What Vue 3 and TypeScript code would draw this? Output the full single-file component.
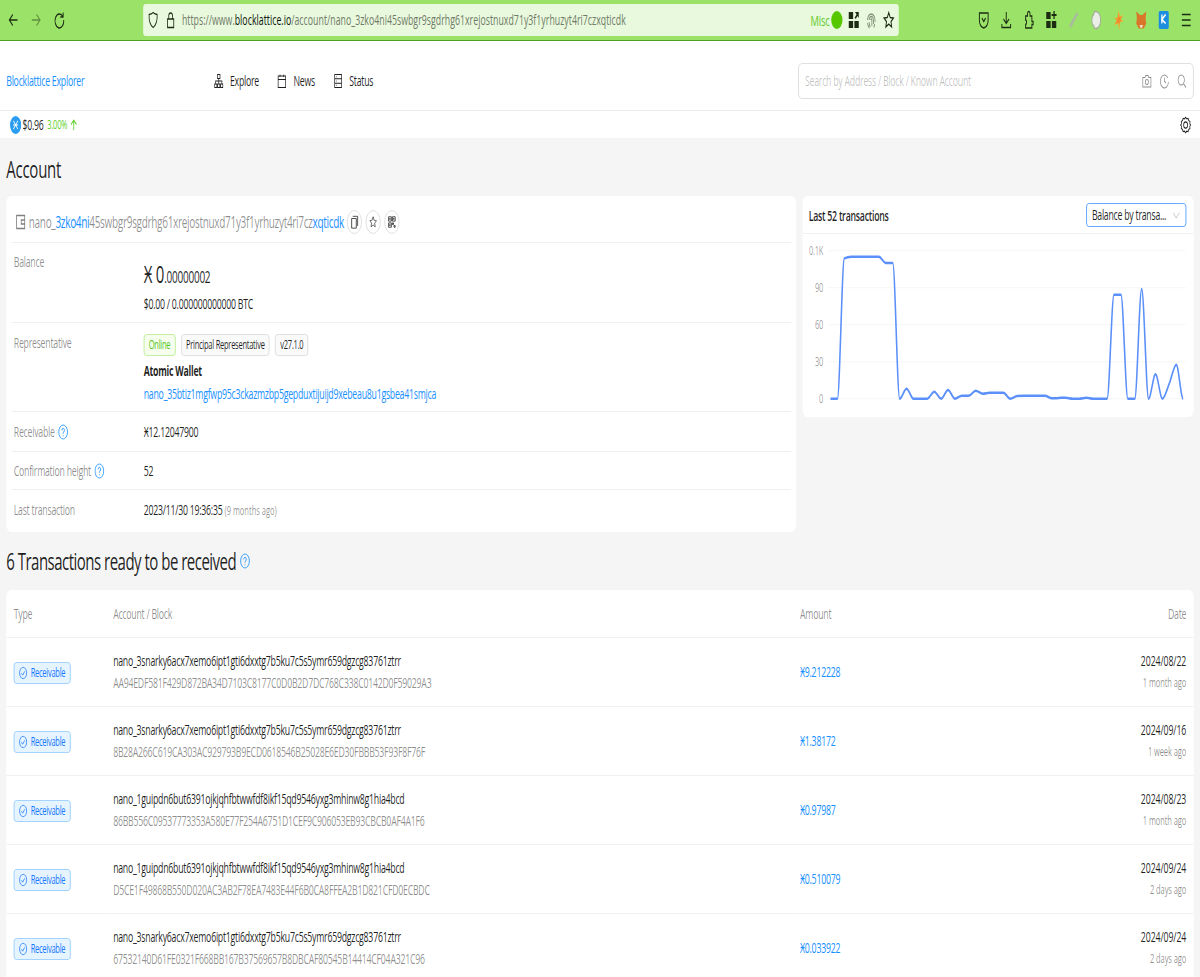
<script setup lang="ts">
import { computed } from 'vue'

// zoomed-in readings of the chart line, y only, one per transaction
const chartY = [
  611, 611, 190, 185, 185, 185, 185, 185, 204, 204, 611, 581, 611, 611, 611, 590, 611, 585, 611, 602,
  602, 587, 596, 593, 593, 593, 611, 603, 602, 602, 602, 602, 610, 609, 608, 611, 611, 608, 611, 611,
  611, 299, 299, 611, 611, 282, 611, 538, 611, 565, 509, 611,
]

function px(zx: number) {
  return ((zx - 6) / 3) * 1.6
}
function py(zy: number) {
  return (zy - 117) / 3
}

const linePath = computed(() => {
  const x0 = px(90)
  const step = (px(1148) - x0) / (chartY.length - 1)
  const ys = chartY.map(py)
  const slopes = ys.slice(1).map((y, i) => (y - ys[i]) / step)
  const tangents = ys.map((_, i) => {
    const a = slopes[i - 1] ?? 0
    const b = slopes[i] ?? 0
    return a * b <= 0 ? 0 : (2 * a * b) / (a + b)
  })
  let d = `M${x0} ${ys[0]}`
  for (let i = 1; i < ys.length; i++) {
    const xa = x0 + step * (i - 1)
    const xb = x0 + step * i
    const c = step / 3
    d += `C${xa + c} ${ys[i - 1] + tangents[i - 1] * c} ${xb - c} ${ys[i] - tangents[i] * c} ${xb} ${ys[i]}`
  }
  return d
})

const ticks = [
  { label: '0.1K', y: 167 },
  { label: '90', y: 278 },
  { label: '60', y: 389 },
  { label: '30', y: 500 },
  { label: '0', y: 611 },
]

const nano1 = 'nano_3snarky6acx7xemo6ipt1gti6dxxtg7b5ku7c5s5ymr659dgzcg83761ztrr'
const nano2 = 'nano_1guipdn6but6391ojkjqhfbtwwfdf8ikf15qd9546yxg3mhinw8g1hia4bcd'

const rows = [
  { account: nano1, hash: 'AA94EDF581F429D872BA34D7103C8177C0D0B2D7DC768C338C0142D0F59029A3', amount: 'Ӿ9.212228', date: '2024/08/22', ago: '1 month ago' },
  { account: nano1, hash: '8B28A266C619CA303AC929793B9ECD0618546B25028E6ED30FBBB53F93F8F76F', amount: 'Ӿ1.38172', date: '2024/09/16', ago: '1 week ago' },
  { account: nano2, hash: '86BB556C09537773353A580E77F254A6751D1CEF9C906053EB93CBCB0AF4A1F6', amount: 'Ӿ0.97987', date: '2024/08/23', ago: '1 month ago' },
  { account: nano2, hash: 'D5CE1F49868B550D020AC3AB2F78EA7483E44F6B0CA8FFEA2B1D821CFD0ECBDC', amount: 'Ӿ0.510079', date: '2024/09/24', ago: '2 days ago' },
  { account: nano1, hash: '67532140D61FE0321F668BB167B37569657B8DBCAF80545B14414CF04A321C96', amount: 'Ӿ0.033922', date: '2024/09/24', ago: '2 days ago' },
]
</script>

<template>
  <div class="screen">
    <div class="toolbar">
      <div class="tb-group">
        <svg class="tb-icon" viewBox="0 0 20 20"><path d="M17 10H4M9.500 4.500 4 10l5.500 5.500" /></svg>
        <svg class="tb-icon faded" viewBox="0 0 20 20"><path d="M3 10h13M10.500 4.500 16 10l-5.500 5.500" /></svg>
        <svg class="tb-icon" viewBox="0 0 20 20"><path d="M15.500 6.500A7 7 0 1 0 17 10M16 2.500v4.500h-4.500" /></svg>
      </div>
      <div class="urlbar">
        <svg class="tb-icon thin" viewBox="0 0 20 20"><path d="M10 2.500c2 1.300 4 1.800 6.500 2 .3 6-1.500 10.500-6.500 13-5-2.500-6.800-7-6.500-13 2.500-.2 4.500-.7 6.500-2Z" /></svg>
        <svg class="tb-icon thin" viewBox="0 0 20 20"><path d="M5 9h10v8.500H5zM7 9V6a3 3 0 0 1 6 0v3" /></svg>
        <div class="url"><span>https://www.</span><b>blocklattice.io</b><span>/account/nano_3zko4ni45swbgr9sgdrhg61xrejostnuxd71y3f1yrhuzyt4ri7czxqticdk</span></div>
        <span class="misc">Misc</span>
        <span class="misc-dot"></span>
        <svg class="tb-icon solid" viewBox="0 0 20 20"><path d="M2 2h7v7H2zM11 11h7v7h-7zM2 11h7v7H2zM12 2h6v6l-2-2-3 3-1.500-1.500 3-3z" /></svg>
        <svg class="tb-icon print" viewBox="0 0 20 20"><path d="M4 10a6 6 0 0 1 12 0v2M6.500 10a3.500 3.500 0 0 1 7 0v4M9 10a1 1 0 0 1 2 0v6M4 13c.3 2 1.300 3.500 3 5M6.500 12c0 2 .7 3.500 2 5M15.500 14c-.3 1.300-.8 2.500-1.500 3.500" /></svg>
        <svg class="tb-icon" viewBox="0 0 20 20"><path d="m10 2.500 2.300 5 5.200.6-3.900 3.500 1.100 5.400-4.700-2.800L5.300 17l1.100-5.400L2.500 8.100l5.200-.6Z" /></svg>
      </div>
      <div class="tb-group ext">
        <svg class="tb-icon" viewBox="0 0 20 20"><path d="M3 3h14v7c0 4-3 7-7 8-4-1-7-4-7-8ZM7 8l3 3.500L13 8" /></svg>
        <svg class="tb-icon" viewBox="0 0 20 20"><path d="M10 2v11M5.500 9l4.500 4.500L14.500 9M3 14v3.500h14V14" /></svg>
        <svg class="tb-icon" viewBox="0 0 20 20"><path d="M5 6h3V3.500a2 2 0 0 1 4 0V6h3v5.500h2v3h-2v3.500H5v-3.500c2 .5 2-5 0-4.500Z" /></svg>
        <svg class="tb-icon solid" viewBox="0 0 20 20"><path d="M2 2h7v7H2zM2 11h7v7H2zM11 11h7v7h-7zM13.500 1h2v3h3v2h-3v3h-2V6h-3V4h3z" /></svg>
        <svg class="tb-icon" viewBox="0 0 20 20"><path class="slash" d="m4 17 6-7 6-7" /></svg>
        <svg class="tb-icon" viewBox="0 0 20 20"><path class="ghost" d="M9 1.500c5 0 8 4 8 8.500s-3 8.500-8 8.500c-2 0-3-1.500-3-3-2 0-3-2-3-5.500s2-5 3-5.500c0-1.500 1-3 3-3Z" /></svg>
        <svg class="tb-icon" viewBox="0 0 20 20"><path class="spark" d="m10 1 1.500 6L17 5l-4 4.500 4 1.500-5 1-1.500 7L9 13l-6 2 4-5-4-2 5 0Z" /></svg>
        <svg class="tb-icon" viewBox="0 0 20 20">
          <path class="fox" d="M2 1.500 8 5h4l6-3.500-1 7 1 5-4 5h-8l-4-5 1-5Z" />
          <path class="fox-light" d="M7 15h6l-2 3H9Z" />
        </svg>
        <svg class="tb-icon" viewBox="0 0 20 20">
          <rect class="k-bg" x="2" y="1" width="16" height="18" rx="2" />
          <path class="k-mark" d="M7 4.500v9M13 4.500l-6 5 6 4" />
        </svg>
        <svg class="tb-icon" viewBox="0 0 20 20"><path d="M3 4.500h14M3 10h14M3 15.500h14" /></svg>
      </div>
    </div>

    <header class="site-header">
      <a class="brand">Blocklattice Explorer</a>
      <nav class="nav">
        <span class="nav-item">
          <svg class="icon" viewBox="0 0 16 16"><path d="M6 1.500h4v4H6zM8 5.500V8M3 11V8h10v3M1.500 11h3.500v3.500H1.500zM6.250 11h3.500v3.500h-3.500zM11 11h3.500v3.500H11zM8 8v3" /></svg>
          Explore
        </span>
        <span class="nav-item">
          <svg class="icon" viewBox="0 0 16 16"><path d="M2 3h12v11.500H2zM2 6.500h12M5 1.500V4M11 1.500V4" /></svg>
          News
        </span>
        <span class="nav-item">
          <svg class="icon" viewBox="0 0 16 16"><path d="M2.500 1.500h11v13h-11zM2.500 5.800h11M2.500 10.200h11M4.500 3.700h1M4.500 8h1M4.500 12.300h1" /></svg>
          Status
        </span>
      </nav>
      <div class="search">
        <span class="placeholder">Search by Address / Block / Known Account</span>
        <svg class="icon" viewBox="0 0 16 16"><path d="M1.500 4.500h3.500l1-2h4l1 2h3.500v9.500h-13z" /><circle cx="8" cy="9" r="2.500" /></svg>
        <svg class="icon" viewBox="0 0 16 16"><path d="M13.500 5A6.500 6.500 0 1 0 14.500 9M8 4.500V8l2.500 2" /></svg>
        <svg class="icon" viewBox="0 0 16 16"><circle cx="7" cy="7" r="5" /><path d="m11 11 3.500 3.500" /></svg>
      </div>
    </header>

    <div class="price-bar">
      <span class="coin">
        <svg viewBox="0 0 20 20"><circle class="coin-bg" cx="10" cy="10" r="10" /><path class="coin-x" d="M6 5.500l8 9M14 5.500l-8 9M5.500 10h9" /></svg>
      </span>
      <span class="price">$0.96</span>
      <span class="change">3.00%</span>
      <svg class="icon up" viewBox="0 0 16 16"><path d="M8 14V2.500M3 7.500l5-5 5 5" /></svg>
      <svg class="icon gear" viewBox="0 0 20 20">
        <path d="M10 1.500l2 1.600 2.500-.4 1 2.400 2.300 1-.4 2.600L19 10l-1.600 1.300.4 2.600-2.300 1-1 2.400-2.500-.4-2 1.600-2-1.600-2.500.4-1-2.400-2.300-1 .4-2.600L1 10l1.600-1.300-.4-2.600 2.300-1 1-2.400 2.500.4Z" />
        <circle cx="10" cy="10" r="3.500" />
      </svg>
    </div>

    <main class="page">
      <h1 class="page-title">Account</h1>
      <div class="overview">
        <section class="card">
          <div class="account-head">
            <svg class="icon wallet" viewBox="0 0 16 16"><path d="M1.500 1.500h13v13h-13zM14.500 6H9v4h5.500" /></svg>
            <span class="address">
              <span class="muted">nano_</span><span class="blue">3zko4ni</span><span class="muted">45swbgr9sgdrhg61xrejostnuxd71y3f1yrhuzyt4ri7cz</span><span class="blue">xqticdk</span>
            </span>
            <span class="round">
              <svg class="icon" viewBox="0 0 16 16"><path d="M5 1.500h9v11M3 4h8.500v11H3z" /></svg>
            </span>
            <span class="round">
              <svg class="icon" viewBox="0 0 20 20"><path d="m10 2.500 2.300 5 5.200.6-3.900 3.500 1.100 5.400-4.700-2.800L5.300 17l1.100-5.400L2.500 8.100l5.200-.6Z" /></svg>
            </span>
            <span class="round">
              <svg class="icon" viewBox="0 0 16 16"><path d="M2 2h5v5H2zM9 2h5v5H9zM2 9h5v5H2zM9 9h2v2H9zM12 12h2v2h-2zM4 4h1v1H4zM11 4h1v1h-1zM4 11h1v1H4z" /></svg>
            </span>
          </div>

          <div class="info-row balance-row">
            <div class="info-label">Balance</div>
            <div class="info-value">
              <div class="balance"><span class="big">Ӿ 0</span><span>.00000002</span></div>
              <div class="fiat">$0.00 / 0.000000000000 BTC</div>
            </div>
          </div>

          <div class="info-row rep-row">
            <div class="info-label">Representative</div>
            <div class="info-value">
              <div class="tags">
                <span class="tag online">Online</span>
                <span class="tag">Principal Representative</span>
                <span class="tag">v27.1.0</span>
              </div>
              <div class="rep-name">Atomic Wallet</div>
              <a class="blue rep-link">nano_35btiz1mgfwp95c3ckazmzbp5gepduxtijuijd9xebeau8u1gsbea41smjca</a>
            </div>
          </div>

          <div class="info-row small-row">
            <div class="info-label">
              Receivable
              <svg class="help" viewBox="0 0 16 16"><circle cx="8" cy="8" r="7" /><path d="M6 6.300a2 2 0 1 1 3 1.700c-.700.500-1 .800-1 1.700M8 11.300v1" /></svg>
            </div>
            <div class="info-value">Ӿ12.12047900</div>
          </div>
          <div class="info-row small-row conf">
            <div class="info-label">
              Confirmation height
              <svg class="help" viewBox="0 0 16 16"><circle cx="8" cy="8" r="7" /><path d="M6 6.300a2 2 0 1 1 3 1.700c-.700.500-1 .800-1 1.700M8 11.300v1" /></svg>
            </div>
            <div class="info-value">52</div>
          </div>
          <div class="info-row small-row last">
            <div class="info-label">Last transaction</div>
            <div class="info-value">2023/11/30 19:36:35 <span class="ago">(9 months ago)</span></div>
          </div>
        </section>

        <section class="card chart-card">
          <div class="chart-head">
            <span class="chart-title">Last 52 transactions</span>
            <div class="select">
              <span>Balance by transa...</span>
              <svg class="icon" viewBox="0 0 16 16"><path d="m2.500 5.500 5.500 6 5.500-6" /></svg>
            </div>
          </div>
          <svg class="chart" viewBox="0 0 626 183">
            <g v-for="t in ticks" :key="t.label">
              <line class="grid" :x1="px(82)" :x2="px(1156)" :y1="py(t.y)" :y2="py(t.y)" />
              <text class="tick" :x="px(68)" :y="py(t.y) + 4" text-anchor="end">{{ t.label }}</text>
            </g>
            <path class="line" :d="linePath" />
          </svg>
        </section>
      </div>

      <h2 class="section-title">
        6 Transactions ready to be received
        <svg class="help" viewBox="0 0 16 16"><circle cx="8" cy="8" r="7" /><path d="M6 6.300a2 2 0 1 1 3 1.700c-.700.500-1 .800-1 1.700M8 11.300v1" /></svg>
      </h2>

      <section class="card table-card">
        <table class="tx-table">
          <colgroup>
            <col class="col-type" />
            <col class="col-account" />
            <col class="col-amount" />
            <col />
          </colgroup>
          <thead>
            <tr>
              <th>Type</th>
              <th>Account / Block</th>
              <th>Amount</th>
              <th class="right">Date</th>
            </tr>
          </thead>
          <tbody>
            <tr v-for="row in rows" :key="row.hash">
              <td>
                <span class="rx-tag">
                  <svg viewBox="0 0 16 16"><circle cx="8" cy="8" r="6.500" /><path d="m5 8.200 2.200 2.300L11 6" /></svg>
                  Receivable
                </span>
              </td>
              <td>
                <div class="tx-account">{{ row.account }}</div>
                <div class="tx-hash">{{ row.hash }}</div>
              </td>
              <td><span class="blue">{{ row.amount }}</span></td>
              <td class="right">
                <div class="tx-date">{{ row.date }}</div>
                <div class="tx-ago">{{ row.ago }}</div>
              </td>
            </tr>
          </tbody>
        </table>
      </section>
    </main>
  </div>
</template>

<style>
html,
body {
  height: 977px;
  overflow: hidden;
  background: #f5f5f5;
}
</style>

<style scoped>
/* the reference is a 1920 wide page squeezed into 1200, so lay out at 1920 and squeeze */
.screen {
  width: 1920px;
  height: 977px;
  overflow: hidden;
  transform: scaleX(0.625);
  transform-origin: 0 0;
  background: #f5f5f5;
  color: rgba(0, 0, 0, 0.88);
  font-family: "Open Sans", "Noto Sans", sans-serif;
  font-size: 14px;
  line-height: 22px;
  letter-spacing: -0.028em;
}
svg {
  fill: none;
  stroke: currentColor;
  flex: none;
}
.toolbar {
  height: 41px;
  box-sizing: border-box;
  border-bottom: 1px solid #4f9e1f;
  background: #9be268;
  display: flex;
  align-items: center;
  padding: 0 12px 0 11px;
  color: #1c2b12;
}
.tb-group {
  display: flex;
  align-items: center;
  gap: 17px;
}
.tb-group.ext {
  gap: 16px;
  margin-left: auto;
}
.tb-icon {
  width: 20px;
  height: 20px;
  stroke-width: 1.500;
}
.tb-icon.faded {
  opacity: 0.45;
}
.tb-icon.thin {
  stroke-width: 1.300;
}
.tb-icon.print {
  opacity: 0.5;
  stroke-width: 1.400;
}
.tb-icon.solid {
  fill: currentColor;
  stroke: none;
}
.urlbar {
  width: 1209px;
  height: 32px;
  margin-left: 124px;
  border-radius: 4px;
  background: #e9f9de;
  display: flex;
  align-items: center;
  padding: 0 6px;
  box-sizing: border-box;
  gap: 8px;
}
.url {
  flex: 1;
  font-size: 14px;
  letter-spacing: 0.05px;
  color: #6f7a67;
  white-space: nowrap;
}
.url b {
  color: #0c140a;
  font-weight: 400;
}
.misc {
  color: #62c92a;
  font-size: 15px;
}
.misc-dot {
  width: 18px;
  height: 18px;
  border-radius: 50%;
  background: #57c800;
  margin-left: -5px;
}
.slash {
  stroke: #a9bc9d;
  stroke-width: 3.500;
}
.ghost {
  fill: #e9eee6;
  stroke: #a4ae9c;
}
.spark {
  fill: #f5892c;
  stroke: #f2c23a;
  stroke-width: 0.500;
}
.fox {
  fill: #d9762a;
  stroke: none;
}
.fox-light {
  fill: #efd9c0;
  stroke: none;
}
.k-bg {
  fill: #1c8ee0;
  stroke: none;
}
.k-mark {
  stroke: #fff;
  stroke-width: 2;
}
.site-header {
  height: 69px;
  box-sizing: border-box;
  background: #fff;
  display: flex;
  align-items: center;
  padding: 11px 10px 0;
}
.brand {
  width: 332px;
  color: #1890ff;
}
.nav {
  display: flex;
  gap: 29px;
}
.nav-item {
  display: flex;
  align-items: center;
  gap: 10px;
}
.icon {
  width: 16px;
  height: 16px;
  stroke-width: 1.100;
}
.search {
  margin-left: auto;
  width: 633px;
  height: 36px;
  box-sizing: border-box;
  border: 1px solid #d9d9d9;
  border-radius: 6px;
  padding: 0 10px;
  display: flex;
  align-items: center;
  gap: 12px;
  color: rgba(0, 0, 0, 0.45);
}
.placeholder {
  flex: 1;
  color: rgba(0, 0, 0, 0.25);
}
.price-bar {
  height: 28px;
  border-top: 1px solid #ececec;
  box-sizing: border-box;
  background: #fff;
  display: flex;
  align-items: center;
  padding: 1px 14px 0 16px;
}
.coin {
  width: 18px;
  height: 18px;
  margin-right: 2px;
}
.coin svg {
  display: block;
  width: 18px;
  height: 18px;
}
.coin-bg {
  fill: #2a9df0;
  stroke: none;
}
.coin-x {
  stroke: #fff;
  stroke-width: 1.200;
}
.price {
  font-size: 14px;
}
.change {
  color: #5fd02a;
  font-size: 12px;
  margin-left: 6px;
}
.up {
  color: #5fd02a;
  width: 14px;
  height: 14px;
  margin-left: 4px;
  stroke-width: 1.500;
}
.gear {
  margin-left: auto;
  width: 18px;
  height: 18px;
  stroke-width: 1.300;
}
.page {
  padding: 0 10px;
}
.page-title {
  margin: 0;
  height: 58px;
  font-size: 24px;
  font-weight: 400;
  line-height: 62px;
}
.overview {
  display: grid;
  grid-template-columns: 1264px 626px;
  gap: 10px;
  align-items: start;
}
.card {
  background: #fff;
  border-radius: 8px;
}
.account-head {
  height: 47px;
  box-sizing: border-box;
  margin: 0 8px;
  padding: 5px 4px 0 6px;
  border-bottom: 1px solid #f0f0f0;
  display: flex;
  align-items: center;
  font-size: 16px;
  letter-spacing: -0.031em;
}
.wallet {
  width: 18px;
  height: 16px;
  color: rgba(0, 0, 0, 0.5);
  margin-right: 4px;
  stroke-width: 1.300;
}
.address {
  margin-right: 5px;
}
.muted {
  color: rgba(0, 0, 0, 0.45);
}
.blue {
  color: #1890ff;
}
.round {
  width: 24px;
  height: 24px;
  margin-right: 6px;
  border: 1px solid #d9d9d9;
  border-radius: 50%;
  box-sizing: border-box;
  display: flex;
  align-items: center;
  justify-content: center;
  color: #222;
}
.round .icon {
  width: 14px;
  height: 14px;
  stroke-width: 1.100;
}
.info-row {
  margin: 0 8px;
  padding: 0 4px;
  border-bottom: 1px solid #f0f0f0;
  display: grid;
  grid-template-columns: 208px 1fr;
}
.info-row.last {
  border-bottom: 0;
}
.info-label {
  color: rgba(0, 0, 0, 0.45);
  display: flex;
  align-items: center;
  gap: 6px;
  height: 22px;
}
.balance-row {
  height: 80px;
  padding-top: 8px;
  box-sizing: border-box;
}
.balance {
  font-size: 16px;
  line-height: 32px;
  margin-top: 7px;
}
.big {
  font-size: 24px;
}
.fiat {
  margin-top: 0;
}
.rep-row {
  height: 89px;
  box-sizing: border-box;
  padding-top: 9px;
}
.tags {
  display: flex;
  gap: 9px;
  margin-top: 2px;
}
.tag {
  height: 22px;
  box-sizing: border-box;
  padding: 0 7px;
  border: 1px solid #d9d9d9;
  border-radius: 4px;
  background: #fafafa;
  font-size: 12px;
  line-height: 20px;
}
.tag.online {
  color: #52c41a;
  background: #f6ffed;
  border-color: #b7eb8f;
}
.rep-name {
  font-weight: 700;
  margin-top: 4px;
}
.rep-link {
  display: block;
  margin-top: 1px;
}
.small-row {
  height: 39px;
  align-items: center;
}
.small-row.conf {
  height: 37px;
}
.small-row.last {
  height: 42px;
}
.small-row.last > div {
  margin-top: -2px;
}
.ago {
  color: rgba(0, 0, 0, 0.45);
  font-size: 12px;
  letter-spacing: 0;
}
.help {
  width: 16px;
  height: 16px;
  color: #1890ff;
  stroke-width: 1;
}
.chart-card {
  height: 221px;
}
.chart-head {
  height: 38px;
  box-sizing: border-box;
  border-bottom: 1px solid #f0f0f0;
  display: flex;
  align-items: center;
  justify-content: space-between;
  padding: 0 12px 0 10px;
}
.chart-title {
  font-weight: 600;
  margin-top: 2px;
}
.select {
  width: 160px;
  height: 24px;
  box-sizing: border-box;
  border: 1px solid #4096ff;
  border-radius: 4px;
  display: flex;
  align-items: center;
  justify-content: space-between;
  padding: 1px 8px 0;
  white-space: nowrap;
}
.select .icon {
  width: 14px;
  height: 14px;
  color: rgba(0, 0, 0, 0.25);
}
.chart {
  display: block;
  width: 626px;
  height: 183px;
}
.grid {
  stroke: #f5f5f5;
}
.tick {
  fill: rgba(0, 0, 0, 0.4);
  stroke: none;
  font-size: 12px;
}
.line {
  stroke: #5b8ff9;
  stroke-width: 2.500;
}
.section-title {
  margin: 0;
  height: 58px;
  display: flex;
  align-items: center;
  gap: 6px;
  font-size: 24px;
  font-weight: 400;
  letter-spacing: -0.034em;
}
.section-title .help {
  width: 16px;
  height: 16px;
}
.tx-table {
  width: 100%;
  table-layout: fixed;
  border-collapse: collapse;
}
.col-type {
  width: 159px;
}
.col-account {
  width: 1099px;
}
.col-amount {
  width: 320px;
}
.tx-table th,
.tx-table td {
  padding: 0 12px;
  text-align: left;
  border-bottom: 1px solid #f0f0f0;
}
.tx-table th {
  height: 47px;
  font-weight: 400;
  color: rgba(0, 0, 0, 0.45);
}
.tx-table td {
  height: 68px;
}
.tx-table .right {
  text-align: right;
}
.rx-tag {
  display: inline-flex;
  align-items: center;
  gap: 5px;
  height: 22px;
  width: 91px;
  margin-top: 2px;
  box-sizing: border-box;
  padding: 0 7px;
  border: 1px solid #91caff;
  border-radius: 4px;
  background: #e6f4ff;
  color: #1677ff;
  font-size: 12px;
  white-space: nowrap;
  vertical-align: middle;
}
.rx-tag svg {
  width: 14px;
  height: 14px;
}
.tx-hash,
.tx-ago {
  color: rgba(0, 0, 0, 0.45);
}
.tx-account,
.tx-hash {
  white-space: nowrap;
}
.tx-date {
  letter-spacing: -0.012em;
}
.tx-ago {
  font-size: 12px;
  letter-spacing: -0.01em;
}
</style>
